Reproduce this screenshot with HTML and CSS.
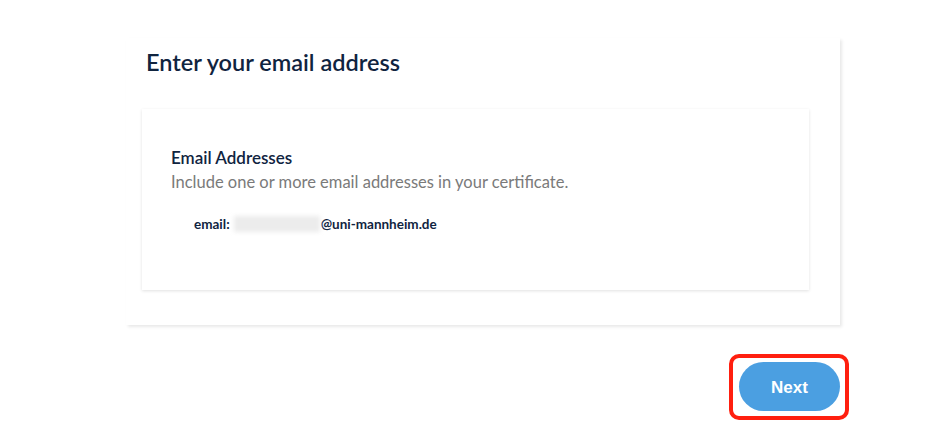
FILE: index.html
```html
<!DOCTYPE html>
<html lang="en">
<head>
<meta charset="utf-8">
<title>Enter your email address</title>
<link rel="stylesheet" href="styles.css">
</head>
<body>
<div class="page">
  <section class="outer-card">
    <h1 class="title">Enter your email address</h1>
    <div class="inner-card">
      <h2 class="section-title">Email Addresses</h2>
      <p class="section-desc">Include one or more email addresses in your certificate.</p>
      <div class="email-row">
        <span class="email-label">email:</span>
        <span class="blur-box"></span>
        <span class="email-domain">@uni-mannheim.de</span>
      </div>
    </div>
  </section>
  <div class="actions">
    <span class="highlight">
      <button class="next-btn" type="button">Next</button>
    </span>
  </div>
</div>
</body>
</html>
```

FILE: styles.css
```css
html, body {
  margin: 0;
  padding: 0;
  background: #ffffff;
}
body {
  font-family: Lato, "Noto Sans", sans-serif;
  color: #10243f;
}
.page {
  width: 928px;
  height: 429px;
  overflow: hidden;
}
.outer-card {
  margin: 38px 0 0 126px;
  width: 714px;
  height: 287px;
  box-sizing: border-box;
  padding: 11px 31px 0 16px;
  background: #fff;
  box-shadow: 2px 2px 3px rgba(0, 0, 0, 0.09);
}
.title {
  margin: 0 0 0 4px;
  font-size: 23.5px;
  font-weight: 600;
  line-height: 27px;
  color: #10243f;
}
.inner-card {
  margin-top: 33px;
  height: 181px;
  box-sizing: border-box;
  padding: 39px 29px 0 29px;
  background: #fff;
  box-shadow: 0 1px 3px rgba(0, 0, 0, 0.12);
}
.section-title {
  margin: 0;
  font-size: 17px;
  font-weight: 600;
  line-height: 20px;
  color: #10243f;
}
.section-desc {
  margin: 4px 0 0 0;
  font-size: 16.5px;
  line-height: 20px;
  color: #7a7a7a;
}
.email-row {
  margin: 23px 0 0 23px;
  display: flex;
  align-items: center;
  font-size: 13.5px;
  font-weight: 700;
  line-height: 18px;
  color: #10243f;
}
.email-label {
  margin-right: 4px;
}
.blur-box {
  display: inline-block;
  width: 86px;
  height: 16px;
  background: #ececec;
  filter: blur(2px);
  margin-right: 1px;
}
.actions {
  display: flex;
  justify-content: flex-end;
  width: 849px;
  margin-top: 29px;
}
.highlight {
  display: inline-flex;
  border: 4px solid #ff1f0f;
  border-radius: 10px;
  padding: 4px 5px 5px 6px;
}
.next-btn {
  width: 101px;
  height: 49px;
  border: none;
  border-radius: 25px;
  background: #4b9fe1;
  color: #ffffff;
  font-family: "Liberation Sans", Arial, sans-serif;
  font-size: 17px;
  font-weight: 700;
  padding: 3px 0 0 0;
  cursor: pointer;
}
```
